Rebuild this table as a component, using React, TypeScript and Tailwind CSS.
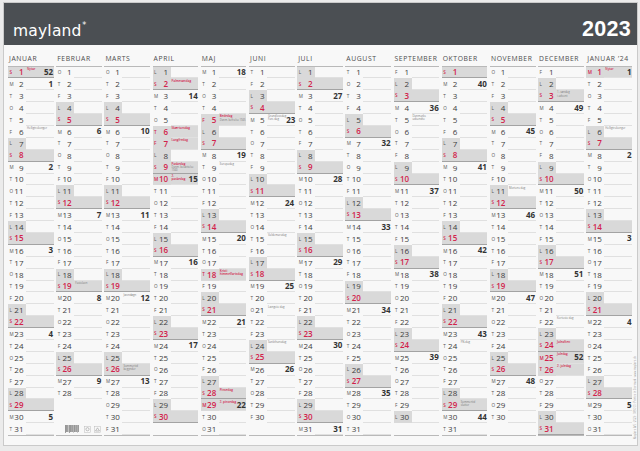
import React from 'react';

const MONTHS = [
  { name: 'JANUAR', year: 2023, month: 0 },
  { name: 'FEBRUAR', year: 2023, month: 1 },
  { name: 'MARTS', year: 2023, month: 2 },
  { name: 'APRIL', year: 2023, month: 3 },
  { name: 'MAJ', year: 2023, month: 4 },
  { name: 'JUNI', year: 2023, month: 5 },
  { name: 'JULI', year: 2023, month: 6 },
  { name: 'AUGUST', year: 2023, month: 7 },
  { name: 'SEPTEMBER', year: 2023, month: 8 },
  { name: 'OKTOBER', year: 2023, month: 9 },
  { name: 'NOVEMBER', year: 2023, month: 10 },
  { name: 'DECEMBER', year: 2023, month: 11 },
  { name: 'JANUAR \u201924', year: 2024, month: 0 },
];

const LETTERS = ['S', 'M', 'T', 'O', 'T', 'F', 'L'];

// weekday holidays (red + shaded even though not sunday)
const HOLIDAYS = new Set([
  '2023-3-6', '2023-3-7', '2023-3-10', '2023-4-5', '2023-4-18',
  '2023-4-29', '2023-11-25', '2023-11-26', '2024-0-1',
]);

type Note = { text: string; red?: boolean; sub?: string };

const NOTES: Record<string, Note> = {
  '2023-0-1': { text: 'Nytår', red: true },
  '2023-0-6': { text: 'Helligtrekonger' },
  '2023-1-19': { text: 'Fastelavn' },
  '2023-2-20': { text: 'Jævndøgn' },
  '2023-2-26': { text: 'Sommertid\nbegynder' },
  '2023-3-2': { text: 'Palmesøndag', red: true },
  '2023-3-6': { text: 'Skærtorsdag', red: true },
  '2023-3-7': { text: 'Langfredag', red: true },
  '2023-3-9': { text: 'Påskedag', red: true, sub: 'Danm. besættelse 1940' },
  '2023-3-10': { text: '2. påskedag', red: true },
  '2023-4-5': { text: 'Bededag', red: true, sub: 'Danm. befrielse 1945' },
  '2023-4-9': { text: 'Europadag' },
  '2023-4-18': { text: 'Kristi\nhimmelfartsdag', red: true },
  '2023-4-28': { text: 'Pinsedag', red: true },
  '2023-4-29': { text: '2. pinsedag', red: true },
  '2023-5-5': { text: 'Grundlovsdag\nFars dag' },
  '2023-5-15': { text: 'Valdemarsdag' },
  '2023-5-21': { text: 'Længste dag' },
  '2023-5-24': { text: 'Sankthansdag' },
  '2023-8-5': { text: 'Danmarks\nudsendte' },
  '2023-9-24': { text: 'FN-dag' },
  '2023-9-29': { text: 'Sommertid\nslutter' },
  '2023-10-11': { text: 'Mortens dag' },
  '2023-11-3': { text: '1. søndag\ni advent' },
  '2023-11-22': { text: 'Korteste dag' },
  '2023-11-24': { text: 'Juleaften', red: true },
  '2023-11-25': { text: 'Juledag', red: true },
  '2023-11-26': { text: '2. juledag', red: true },
  '2024-0-1': { text: 'Nytår', red: true },
  '2024-0-6': { text: 'Helligtrekonger' },
};

function isoWeek(d: Date) {
  const t = new Date(Date.UTC(d.getFullYear(), d.getMonth(), d.getDate()));
  const day = t.getUTCDay() || 7;
  t.setUTCDate(t.getUTCDate() + 4 - day);
  const y0 = new Date(Date.UTC(t.getUTCFullYear(), 0, 1));
  return Math.ceil(((t.getTime() - y0.getTime()) / 86400000 + 1) / 7);
}

function Barcode() {
  const bars = [1, 0.5, 1.5, 0.5, 0.5, 1, 0.5, 1.5, 0.5, 1, 0.5, 0.5, 1.5, 0.5, 1, 0.5, 0.5, 1];
  let x = 0;
  return (
    <div className="flex items-center gap-[3px] pl-[9px] pt-[2px]">
      <svg width="16" height="8" viewBox="0 0 16 8">
        {bars.map((w, i) => {
          const r = <rect key={i} x={x} y={0} width={w * 0.55} height={i % 5 === 0 ? 8 : 7} fill="#555" />;
          x += w * 0.55 + 0.35;
          return r;
        })}
      </svg>
      <svg width="7" height="7" viewBox="0 0 7 7">
        <rect x="0.3" y="0.3" width="6.4" height="6.4" fill="none" stroke="#bbb" strokeWidth="0.5" />
        <circle cx="3.5" cy="3.2" r="1.6" fill="none" stroke="#888" strokeWidth="0.5" />
      </svg>
      <svg width="7" height="7" viewBox="0 0 7 7">
        <rect x="0.3" y="0.3" width="6.4" height="6.4" fill="none" stroke="#bbb" strokeWidth="0.5" />
        <path d="M1.5 5 L3.5 1.8 L5.5 5 Z" fill="none" stroke="#888" strokeWidth="0.5" />
      </svg>
    </div>
  );
}

function DayRow({ year, month, day }: { year: number; month: number; day: number }) {
  const date = new Date(year, month, day);
  const dow = date.getDay();
  const key = `${year}-${month}-${day}`;
  const isSun = dow === 0;
  const isSat = dow === 6;
  const red = isSun || HOLIDAYS.has(key);
  const note = NOTES[key];
  let week: number | null = null;
  if (dow === 1) week = isoWeek(date);
  if (year === 2023 && month === 0 && day === 1) week = 52;

  return (
    <div className={`flex h-[11.9px] ${red ? 'bg-[#d9d9d9]' : ''} ${isSun ? 'border-b border-[#a3a3a3]' : ''}`}>
      <div className={`w-[18px] flex items-center pl-[1.5px] ${isSat ? 'bg-[#d9d9d9]' : ''}`}>
        <span className={`w-[6px] text-[4.6px] leading-none ${red ? 'text-[#d2224b] font-semibold' : 'text-[#555]'}`}>
          {LETTERS[dow]}
        </span>
        <span className={`flex-1 text-right pr-[2.5px] text-[8px] leading-none ${red ? 'text-[#d2224b] font-semibold' : 'text-[#3d3d3d]'}`}>
          {day}
        </span>
      </div>
      <div className={`flex-1 min-w-0 flex items-center justify-between ${isSun ? '' : 'border-b border-[#e0e0e0]'}`}>
        <div className="self-start pt-[1.2px] pl-[1px] leading-[1.15] whitespace-pre-line">
          {note && (
            <div className={`${note.red ? 'text-[3px] text-[#d2224b] font-semibold' : 'text-[2.8px] text-[#7a7a7a]'}`}>{note.text}</div>
          )}
          {note?.sub && <div className="text-[2.6px] text-[#7a7a7a]">{note.sub}</div>}
        </div>
        {week !== null && (
          <span className="pr-[0.5px] text-[8px] font-bold leading-none text-[#333]">{week}</span>
        )}
      </div>
    </div>
  );
}

function MonthColumn({ name, year, month }: { name: string; year: number; month: number }) {
  const days = new Date(year, month + 1, 0).getDate();
  const rows = Array.from({ length: 31 }, (_, i) => i + 1);
  return (
    <div className="flex flex-col min-w-0">
      <div className="h-[21.5px] flex items-end pb-[2.5px] pl-[1px] border-b-[1.5px] border-[#b9b9b9]">
        <span className="text-[6.8px] tracking-[0.6px] leading-none text-[#4d4d4d] whitespace-nowrap">{name}</span>
      </div>
      <div className="flex flex-col border-b border-[#b9b9b9]">
        {rows.map((d) =>
          d <= days ? (
            <DayRow key={d} year={year} month={month} day={d} />
          ) : (
            <div key={d} className="h-[11.9px]">
              {month === 1 && d === 31 && <Barcode />}
            </div>
          )
        )}
      </div>
    </div>
  );
}

export default function App() {
  return (
    <div className="w-[640px] h-[451px] bg-[#ebebeb] pt-[2px] pl-[3px] pr-[2px] font-['Open_Sans',sans-serif]">
      <div className="relative h-[444px] bg-[#f8f8f8] border border-[#cacaca] flex flex-col">
        <div className="h-[42px] bg-[#4b4f53] flex items-end justify-between pl-[9px] pr-[6px] pb-[5px]">
          <div className="flex items-start text-white font-['DejaVu_Sans',sans-serif] mb-[1px]">
            <span className="text-[15.5px] leading-none tracking-[0.2px]">mayland</span>
            <span className="text-[8px] leading-none ml-[0.5px] -mt-[2px]">*</span>
          </div>
          <span className="text-white font-['Liberation_Sans',sans-serif] font-bold text-[21.5px] leading-none tracking-[0.3px]">
            2023
          </span>
        </div>
        <div className="grid grid-cols-13 gap-x-[2.5px] pl-[4px] pr-[5px]">
          {MONTHS.map((m) => (
            <MonthColumn key={m.name} name={m.name} year={m.year} month={m.month} />
          ))}
        </div>
        <div className="absolute right-[0px] bottom-[6px] [writing-mode:vertical-rl] rotate-180 text-[2.6px] text-[#9a9a9a] leading-none">
          Mayland A/S · 2023 · 0850 00 · Printed in Denmark · www.mayland.dk
        </div>
      </div>
    </div>
  );
}
